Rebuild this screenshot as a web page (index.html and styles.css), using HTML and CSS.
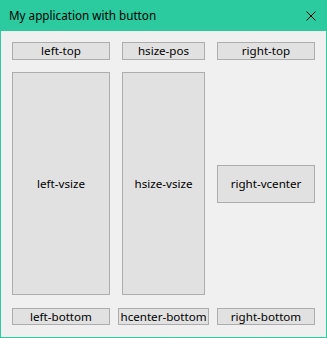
FILE: index.html
```html
<!DOCTYPE html>
<html lang="en">
<head>
    <meta charset="UTF-8">
    <meta name="viewport" content="width=device-width, initial-scale=1.0">
    <title>My application with button</title>
    <link rel="stylesheet" href="styles.css">
</head>
<body>
    <div class="window">
        <div class="titlebar">
            <span class="title">My application with button</span>
            <svg class="close" width="10" height="10" viewBox="0 0 10 10">
                <path d="M0.5 0.5 L9.5 9.5 M9.5 0.5 L0.5 9.5" stroke="#000" stroke-width="1" fill="none"/>
            </svg>
        </div>
        <div class="content">
            <button class="btn">left-top</button>
            <button class="btn">hsize-pos</button>
            <button class="btn">right-top</button>

            <button class="btn">left-vsize</button>
            <button class="btn">hsize-vsize</button>
            <button class="btn vcenter">right-vcenter</button>

            <button class="btn">left-bottom</button>
            <button class="btn hcenter">hcenter-bottom</button>
            <button class="btn">right-bottom</button>
        </div>
    </div>
</body>
</html>
```

FILE: styles.css
```css
body {
    margin: 0;
    font-family: "Noto Sans", "Open Sans", sans-serif;
    font-size: 12px;
    color: #000;
}

.window {
    width: 327px;
    height: 338px;
    box-sizing: border-box;
    border: 1px solid #2bcb9f;
    background-color: #f0f0f0;
    display: flex;
    flex-direction: column;
}

.titlebar {
    height: 30px;
    background-color: #2bcb9f;
    display: flex;
    align-items: center;
    justify-content: space-between;
    padding: 0 10px 0 8px;
    flex-shrink: 0;
}

.title {
    font-size: 11.7px;
    line-height: 1;
}

.close {
    display: block;
}

.content {
    flex: 1;
    display: grid;
    grid-template-columns: 98px 83px 98px;
    grid-template-rows: 18px 223px 18px;
    column-gap: 12px;
    row-gap: 12px;
    padding: 11px 11px 11px 11px;
}

.content > :nth-child(n+7) {
    margin-top: 1px;
}

.btn {
    box-sizing: border-box;
    margin: 0;
    padding: 0;
    background-color: #e1e1e1;
    border: 1px solid #adadad;
    font-family: inherit;
    font-size: 11.6px;
    color: #000;
    line-height: 1;
}

.vcenter {
    align-self: center;
    height: 38px;
}

.hcenter {
    justify-self: center;
    padding: 0 1px;
    white-space: nowrap;
}
```
